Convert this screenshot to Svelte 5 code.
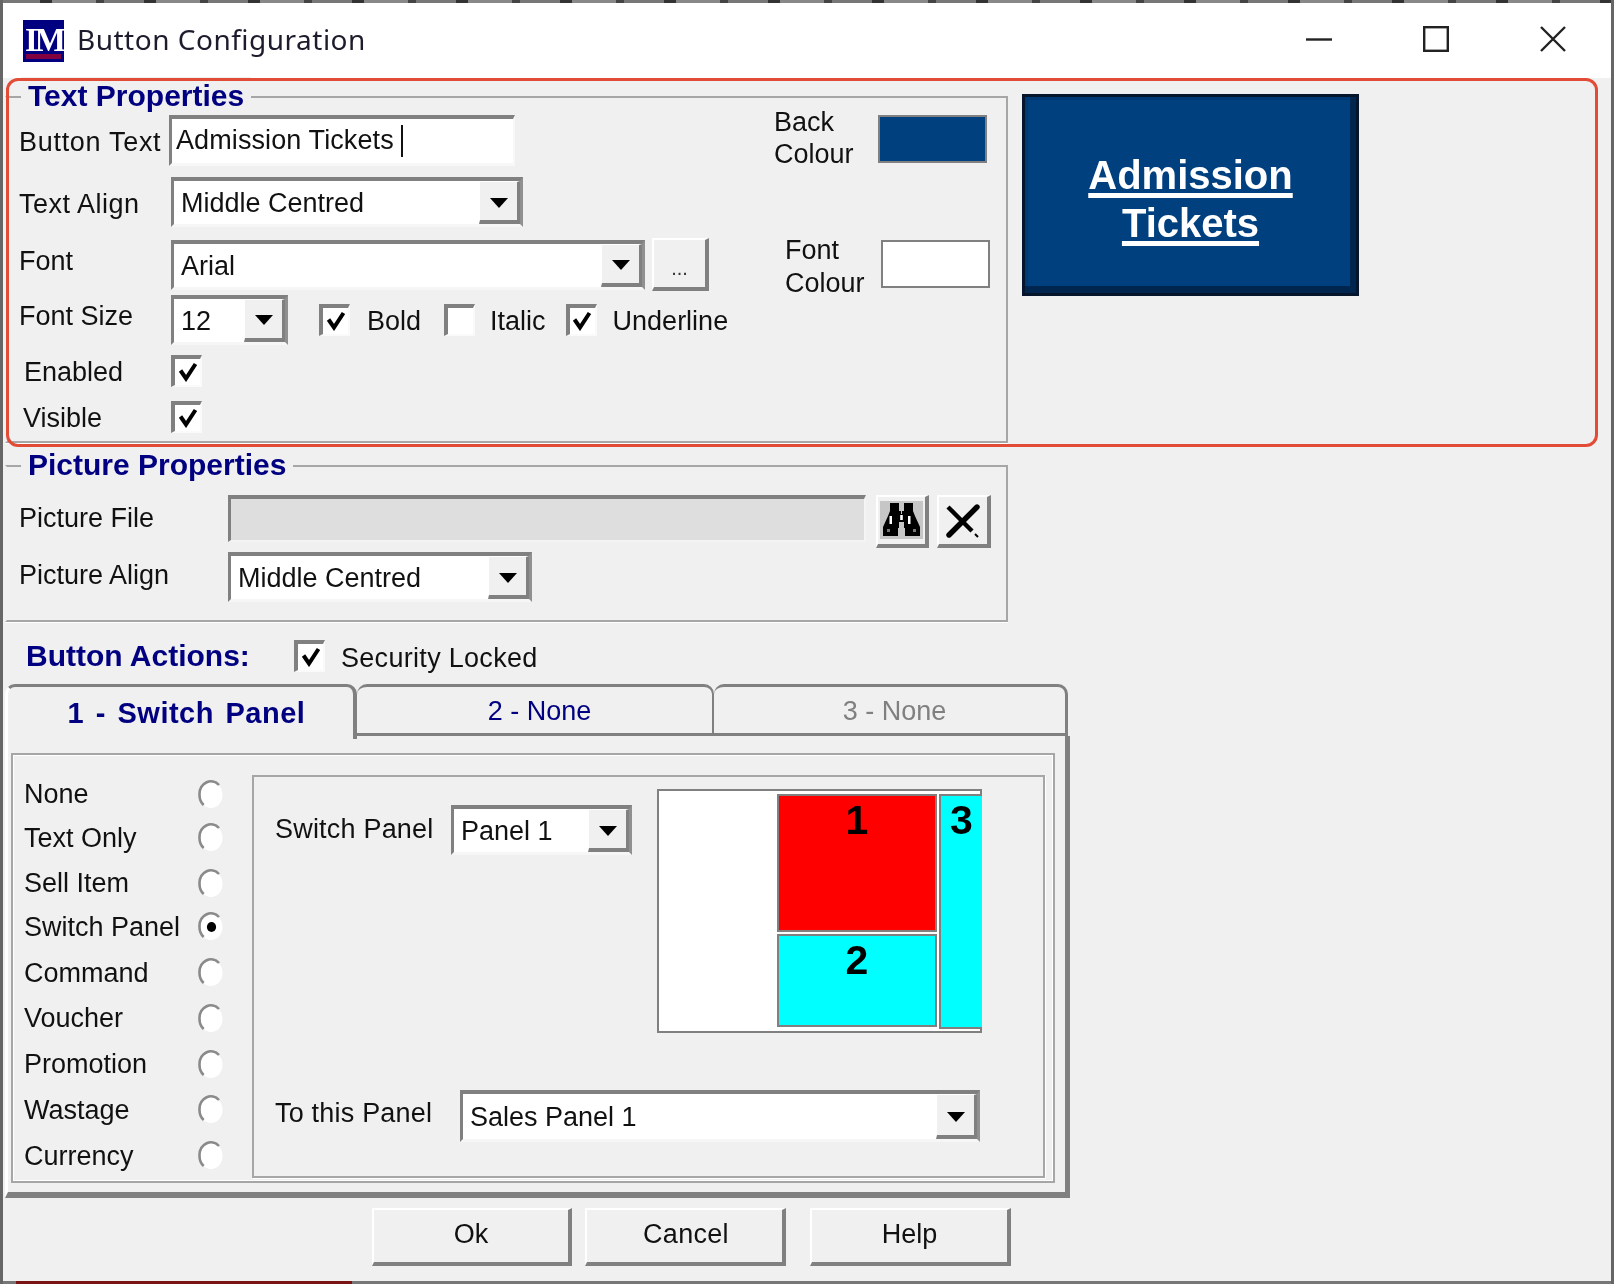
<script>
  const actions = ['None', 'Text Only', 'Sell Item', 'Switch Panel', 'Command', 'Voucher', 'Promotion', 'Wastage', 'Currency'];
  let action = $state('Switch Panel');
  let bold = $state(true);
  let italic = $state(false);
  let underline = $state(true);
  let enabled = $state(true);
  let visible = $state(true);
  let locked = $state(true);
</script>

{#snippet arrow()}
  <span class="arrow">
    <svg width="18" height="10" viewBox="0 0 18 10"><path d="M0 0h18L9 10z" fill="#000" /></svg>
  </span>
{/snippet}

{#snippet combo(value, cls)}
  <div class="combo {cls}">
    <span class="value">{value}</span>
    {@render arrow()}
  </div>
{/snippet}

{#snippet check(on, toggle)}
  <button class="check" onclick={toggle} aria-label="toggle" aria-pressed={on}>
    {#if on}
      <svg width="20" height="20" viewBox="0 0 20 20"><path d="M2.5 8.5l5.5 8L17.5 2" fill="none" stroke="#000" stroke-width="4" /></svg>
    {/if}
  </button>
{/snippet}

<div class="window">
  <div class="strip-top"></div>

  <header class="titlebar">
    <span class="logo"><span class="logo-text">IM</span><i></i></span>
    <span class="title">Button Configuration</span>
    <div class="controls">
      <svg width="26" height="28" viewBox="0 0 26 28"><path d="M0 14.5h26" stroke="#222" stroke-width="2.4" /></svg>
      <svg width="26" height="28" viewBox="0 0 26 28"><rect x="1.2" y="2.2" width="23.6" height="23.6" fill="none" stroke="#222" stroke-width="2.4" /></svg>
      <svg width="26" height="28" viewBox="0 0 26 28"><path d="M1 2l24 24M25 2L1 26" stroke="#222" stroke-width="2.4" /></svg>
    </div>
  </header>

  <div class="main">
    <div class="top">
      <section class="group text-group">
        <h2 class="legend">Text Properties</h2>
        <div class="fields">
          <div class="row r1">
            <span class="lbl up wide">Button Text</span>
            <div class="input"><span>Admission Tickets</span><i class="caret"></i></div>
          </div>
          <div class="row r2">
            <span class="lbl up wide2">Text Align</span>
            {@render combo('Middle Centred', 'w-align')}
          </div>
          <div class="row r3">
            <span class="lbl up3">Font</span>
            {@render combo('Arial', 'w-font')}
            <button class="raised dots">...</button>
          </div>
          <div class="row r4">
            <span class="lbl up3">Font Size</span>
            {@render combo('12', 'w-size')}
            <div class="opts">
              {@render check(bold, () => (bold = !bold))}<span class="opt-b">Bold</span>
              {@render check(italic, () => (italic = !italic))}<span class="opt-i">Italic</span>
              {@render check(underline, () => (underline = !underline))}<span class="opt-u">Underline</span>
            </div>
          </div>
          <div class="row r5">
            <span class="lbl in5">Enabled</span>
            {@render check(enabled, () => (enabled = !enabled))}
          </div>
          <div class="row r6">
            <span class="lbl in4">Visible</span>
            {@render check(visible, () => (visible = !visible))}
          </div>
        </div>

        <div class="colours">
          <div class="colour back">
            <span>Back<br />Colour</span>
            <div class="swatch navy"></div>
          </div>
          <div class="colour fore">
            <span>Font<br />Colour</span>
            <div class="swatch white"></div>
          </div>
        </div>
      </section>

      <div class="preview"><u>Admission</u><br /><u>Tickets</u></div>
    </div>

    <section class="group picture-group">
      <h2 class="legend">Picture Properties</h2>
      <div class="row p1">
        <span class="lbl plbl">Picture File</span>
        <div class="file"></div>
        <button class="raised tool find" aria-label="Browse">
          <span class="pressed">
            <svg width="39" height="33" viewBox="0 0 39 33">
              <path d="M8 0h9v8h2v3h1V8h2V0h9v8l2 5 5 11v9H23v-8h-1v-6h-5v6h-1v8H1v-9l5-11 2-5z" fill="#000" />
              <path d="M7.5 13h2.5v8H7.5zM26 13h2.5v8H26zM18.2 12h2.6v5h-2.6z" fill="#fff" />
              <path d="M5 26h3v3H5zM31 26h3v3h-3z" fill="#777" />
            </svg>
          </span>
        </button>
        <button class="raised tool clear" aria-label="Clear">
          <svg width="36" height="36" viewBox="0 0 36 36">
            <path d="M4 32L32 4" stroke="#000" stroke-width="5.4" stroke-linecap="round" />
            <path d="M3 4l24 24" stroke="#000" stroke-width="4.4" />
            <path d="M30 31l3 3" stroke="#000" stroke-width="2" />
          </svg>
        </button>
      </div>
      <div class="row p2">
        <span class="lbl plbl pa">Picture Align</span>
        {@render combo('Middle Centred', 'w-palign')}
      </div>
    </section>

    <div class="actions-row">
      <h2 class="actions-title">Button Actions:</h2>
      {@render check(locked, () => (locked = !locked))}
      <span class="locked">Security Locked</span>
    </div>

    <div class="tabs">
      <div class="tab active">1 - Switch Panel</div>
      <div class="tab second">2 - None</div>
      <div class="tab third">3 - None</div>
    </div>

    <div class="tab-panel">
      <div class="inner">
        <div class="radios">
          {#each actions as a}
            <button class="radio-row" onclick={() => (action = a)}>
              <span class="radio-label">{a}</span>
              <svg width="28" height="30" viewBox="0 0 28 30">
                <ellipse cx="14" cy="15" rx="11.5" ry="13" fill="#fff" />
                <path d="M22 5A11.5 13 0 0 0 2.5 15c0 4 1.2 7.4 4.2 10" fill="none" stroke="#8a8a8a" stroke-width="2.6" />
                {#if a === action}<ellipse cx="14.5" cy="15" rx="4.6" ry="5" fill="#000" />{/if}
              </svg>
            </button>
          {/each}
        </div>

        <div class="switch-box">
          <div class="switch-top">
            <span class="lbl sw">Switch Panel</span>
            {@render combo('Panel 1', 'w-panel')}
            <div class="diagram">
              <div class="cell c1">1</div>
              <div class="cell c2">2</div>
              <div class="cell c3">3</div>
            </div>
          </div>
          <div class="switch-bottom">
            <span class="lbl to">To this Panel</span>
            {@render combo('Sales Panel 1', 'w-sales')}
          </div>
        </div>
      </div>
    </div>

    <footer class="buttons">
      <button class="raised btn">Ok</button>
      <button class="raised btn cancel">Cancel</button>
      <button class="raised btn help">Help</button>
    </footer>
  </div>

  <div class="strip-bottom"><i></i></div>
  <div class="highlight"></div>
</div>

<style>
  :global(body) {
    margin: 0;
    background: #f0f0f0;
  }
  * {
    box-sizing: border-box;
  }
  .window {
    position: relative;
    width: 1614px;
    height: 1284px;
    overflow: hidden;
    background: #f0f0f0;
    border-left: 3px solid #666;
    border-right: 3px solid #666;
    font-family: 'Liberation Sans', Arial, sans-serif;
    font-size: 27px;
    color: #111;
    filter: blur(0.45px);
    display: flex;
    flex-direction: column;
  }
  button {
    font: inherit;
    color: inherit;
    padding: 0;
  }

  .strip-top {
    height: 3px;
    margin: 0 -3px;
    background: repeating-linear-gradient(90deg, #777 0 40px, #333 40px 52px, #888 52px 96px, #444 96px 104px);
  }
  .titlebar {
    height: 75px;
    flex: none;
    background: #fff;
    display: flex;
    align-items: center;
    padding-left: 20px;
  }
  .logo {
    width: 41px;
    height: 42px;
    background: #000080;
    position: relative;
    display: block;
    overflow: hidden;
    margin-top: 1px;
  }
  .logo-text {
    display: block;
    font-family: 'Liberation Serif', serif;
    font-weight: bold;
    font-size: 33px;
    letter-spacing: -3px;
    line-height: 40px;
    color: #fff;
    padding-left: 2px;
  }
  .logo i {
    position: absolute;
    left: 3px;
    right: 3px;
    bottom: 3px;
    height: 5px;
    background: #800040;
  }
  .title {
    margin: 0 0 3px 13px;
    font-size: 28px;
    font-family: 'Noto Sans', 'Liberation Sans', sans-serif;
    letter-spacing: 0.5px;
    color: #1c1c2c;
  }
  .controls {
    margin-left: auto;
    margin-right: 45px;
    display: flex;
    gap: 91px;
    margin-top: -3px;
  }

  .main {
    flex: 1;
    display: flex;
    flex-direction: column;
    padding-left: 2px;
  }
  .top {
    display: flex;
    align-items: flex-start;
    margin-top: 18px;
  }
  .group {
    position: relative;
    width: 1003px;
    border: 2px solid #a6a6a6;
    border-left-color: transparent;
    box-shadow: 0 1px 0 #fff;
  }
  .legend {
    position: absolute;
    left: 14px;
    top: -21px;
    margin: 0;
    padding: 0 7px;
    background: #f0f0f0;
    color: #000080;
    font-size: 30px;
    font-weight: bold;
    line-height: 38px;
  }
  .text-group {
    height: 347px;
    display: flex;
  }
  .fields {
    width: 761px;
    padding: 17px 0 0 12px;
    flex: none;
  }
  .row {
    display: flex;
    align-items: center;
  }
  .lbl {
    flex: none;
    width: 152px;
    white-space: nowrap;
  }
  .up { padding-top: 4px; }
  .up3 { padding-bottom: 6px; }
  .wide { letter-spacing: 0.7px; }
  .wide2 { letter-spacing: 0.5px; }
  .r1 { height: 51px; }
  .r2 { height: 50px; margin-top: 11px; }
  .r3 { height: 53px; margin-top: 11px; }
  .r4 { height: 51px; margin-top: 3px; }
  .r5 { height: 32px; margin-top: 10px; }
  .r6 { height: 32px; margin-top: 14px; }
  .in5 { padding: 2px 0 0 5px; }
  .in4 { padding: 2px 0 0 4px; }

  .input {
    margin-left: -2px;
    width: 346px;
    height: 51px;
    background: #fff;
    border-style: solid;
    border-width: 4px 2px 3px 3px;
    border-color: #808080 #f8f8f8 #f8f8f8 #808080;
    display: flex;
    align-items: center;
    padding: 0 0 2px 4px;
    white-space: nowrap;
    letter-spacing: 0.1px;
  }
  .caret {
    width: 2px;
    height: 32px;
    background: #111;
    margin: 2px 0 0 7px;
  }
  .combo {
    flex: none;
    display: flex;
    align-items: stretch;
    justify-content: space-between;
    background: #fff;
    height: 50px;
    border-style: solid;
    border-width: 4px 3px 3px 3px;
    border-color: #808080 #909090 #f6f6f6 #808080;
    white-space: nowrap;
  }
  .value {
    padding: 2px 0 0 7px;
    display: flex;
    align-items: center;
  }
  .arrow {
    flex: none;
    width: 41px;
    background: #f0f0f0;
    border-style: solid;
    border-width: 1px 3px 4px 1px;
    border-color: #fff #808080 #808080 #fff;
    display: flex;
    align-items: center;
    justify-content: center;
    padding-top: 3px;
  }
  .w-align { width: 352px; }
  .w-font { width: 474px; }
  .w-size { width: 117px; }
  .w-palign { width: 304px; }
  .w-panel { width: 181px; }
  .w-sales { width: 520px; height: 52px; }

  .raised {
    background: #f0f0f0;
    border-style: solid;
    border-width: 2px 4px 4px 2px;
    border-color: #fff #808080 #808080 #fff;
    display: flex;
    align-items: center;
    justify-content: center;
    cursor: default;
  }
  .dots {
    width: 57px;
    height: 53px;
    margin-left: 7px;
    font-size: 20px;
    color: #333;
    padding-top: 10px;
  }
  .opts {
    display: flex;
    align-items: center;
    margin-left: 31px;
    padding-top: 1px;
  }
  .opts span {
    padding-top: 2px;
  }
  .opt-b { margin: 0 23px 0 17px; }
  .opt-i { margin: 0 20px 0 15px; }
  .opt-u { margin-left: 16px; }

  .check {
    flex: none;
    width: 31px;
    height: 32px;
    background: #fff;
    border-style: solid;
    border-width: 4px 2px 2px 4px;
    border-color: #808080 #fafafa #fafafa #808080;
    display: flex;
    align-items: center;
    justify-content: center;
    cursor: default;
  }

  .colours {
    flex: 1;
    padding-left: 6px;
  }
  .colour {
    display: flex;
    align-items: flex-start;
    line-height: 32px;
  }
  .back {
    margin-top: 8px;
  }
  .back span {
    width: 104px;
  }
  .fore {
    margin-top: 70px;
    padding-left: 11px;
    line-height: 33px;
  }
  .fore span {
    width: 96px;
    margin-top: -6px;
  }
  .back span + .swatch {
    margin-top: 9px;
  }
  .swatch {
    width: 109px;
    height: 48px;
    border: 2px solid #808080;
  }
  .navy { background: #00407f; }
  .white { background: #fff; }

  .preview {
    margin-left: 14px;
    width: 337px;
    height: 202px;
    margin-top: -2px;
    background: #00407f;
    border: 3px solid #05152b;
    box-shadow: inset -6px -7px 0 #00264f, inset 3px 3px 0 #003a75;
    color: #fff;
    font-size: 40px;
    font-weight: bold;
    line-height: 48px;
    text-align: center;
    padding: 54px 0 0 0;
  }
  .preview u {
    text-underline-offset: 4px;
    text-decoration-thickness: 5px;
  }

  .picture-group {
    margin-top: 22px;
    height: 157px;
    padding: 28px 0 0 12px;
  }
  .plbl { width: 209px; }
  .p1 { height: 53px; }
  .p2 { height: 50px; margin-top: 4px; }
  .p1 .lbl { padding-bottom: 6px; }
  .pa { padding-bottom: 4px; }
  .file {
    width: 638px;
    height: 47px;
    margin-bottom: 6px;
    background: #dedede;
    border-style: solid;
    border-width: 4px 2px 2px 3px;
    border-color: #808080 #f4f4f4 #f4f4f4 #808080;
  }
  .tool {
    height: 53px;
  }
  .find {
    width: 53px;
    margin-left: 10px;
    padding: 0;
  }
  .pressed {
    width: 43px;
    height: 38px;
    background: #c6c6c6;
    display: flex;
    align-items: center;
    justify-content: center;
    margin-top: -2px;
  }
  .clear {
    width: 54px;
    margin-left: 8px;
  }

  .actions-row {
    margin-top: 18px;
    height: 32px;
    display: flex;
    align-items: center;
    padding-left: 21px;
  }
  .actions-title {
    margin: 0;
    width: 268px;
    flex: none;
    color: #000080;
    font-size: 30px;
    font-weight: bold;
  }
  .locked {
    margin-left: 16px;
    padding-top: 4px;
    letter-spacing: 0.3px;
  }

  .tabs {
    margin-top: 12px;
    height: 52px;
    display: flex;
    position: relative;
    z-index: 1;
  }
  .tab {
    height: 52px;
    border: solid #808080;
    border-width: 3px 2px 3px 0;
    border-radius: 10px 10px 0 0;
    display: flex;
    align-items: center;
    justify-content: center;
    background: #f0f0f0;
    padding-top: 2px;
  }
  .active {
    width: 352px;
    height: 55px;
    border-left: 3px solid #fff;
    border-bottom: 0;
    border-right: 4px solid #808080;
    color: #000080;
    font-weight: bold;
    font-size: 29px;
    letter-spacing: 0.5px;
    word-spacing: 3px;
    white-space: pre;
    padding: 0 0 0 12px;
  }
  .second {
    width: 357px;
    color: #000080;
    padding-left: 10px;
  }
  .third {
    width: 354px;
    color: #808080;
    padding-left: 10px;
    border-right-width: 3px;
  }
  .tab-panel {
    width: 1065px;
    height: 462px;
    border: solid #808080;
    border-width: 0 5px 6px 3px;
    border-left-color: #fff;
    padding: 17px 10px 9px 3px;
  }
  .inner {
    height: 100%;
    border: 2px solid #a6a6a6;
    box-shadow: inset 0 0 0 1px #fff;
    padding: 20px 8px 3px 0;
    display: flex;
  }
  .radios {
    width: 239px;
    flex: none;
    margin-top: -3px;
    padding-left: 11px;
  }
  .radio-row {
    width: 216px;
    height: 45.8px;
    display: flex;
    align-items: center;
    background: none;
    border: 0;
    cursor: default;
    text-align: left;
  }
  .radio-row:nth-child(2),
  .radio-row:nth-child(4) {
    margin-top: -2.5px;
  }
  .radio-label {
    width: 173px;
    white-space: nowrap;
  }
  .switch-box {
    flex: 1;
    border: 2px solid #a6a6a6;
    box-shadow: 1px 1px 0 #fff;
    padding: 12px 0 0 21px;
  }
  .switch-top {
    display: flex;
    align-items: flex-start;
  }
  .sw {
    width: 176px;
    margin-top: 25px;
    letter-spacing: 0.2px;
  }
  .switch-top :global(.combo) {
    margin-top: 16px;
  }
  .diagram {
    position: relative;
    width: 325px;
    height: 244px;
    margin-left: 25px;
    background: #fff;
    border: 2px solid #808080;
  }
  .cell {
    position: absolute;
    border: 2px solid #808080;
    color: #000;
    font-size: 41px;
    font-weight: bold;
    line-height: 44px;
    text-align: center;
    padding-top: 2px;
  }
  .c1 { left: 118px; top: 3px; width: 160px; height: 138px; background: #f00; }
  .c2 { left: 118px; top: 143px; width: 160px; height: 93px; background: #0ff; }
  .c3 { left: 280px; top: 3px; width: 43px; height: 235px; background: #0ff; border-right: 0; }
  .switch-bottom {
    display: flex;
    align-items: center;
    margin-top: 57px;
  }
  .to {
    width: 185px;
    padding-bottom: 6px;
    letter-spacing: 0.2px;
  }

  .buttons {
    margin-top: 10px;
    display: flex;
    padding-left: 367px;
  }
  .btn {
    width: 200px;
    height: 58px;
    padding-bottom: 3px;
  }
  .cancel {
    width: 201px;
    margin-left: 13px;
    letter-spacing: 0.3px;
    padding-left: 3px;
  }
  .help {
    width: 201px;
    margin-left: 24px;
  }

  .strip-bottom {
    position: absolute;
    left: -3px;
    right: -3px;
    bottom: 0;
    height: 3px;
    background: #777;
  }
  .strip-bottom i {
    display: block;
    margin-left: 16px;
    width: 336px;
    height: 3px;
    background: #7a1414;
  }
  .highlight {
    position: absolute;
    left: 3px;
    top: 78px;
    width: 1592px;
    height: 369px;
    border: 3.5px solid #e24c37;
    border-radius: 12px;
    pointer-events: none;
  }
</style>
